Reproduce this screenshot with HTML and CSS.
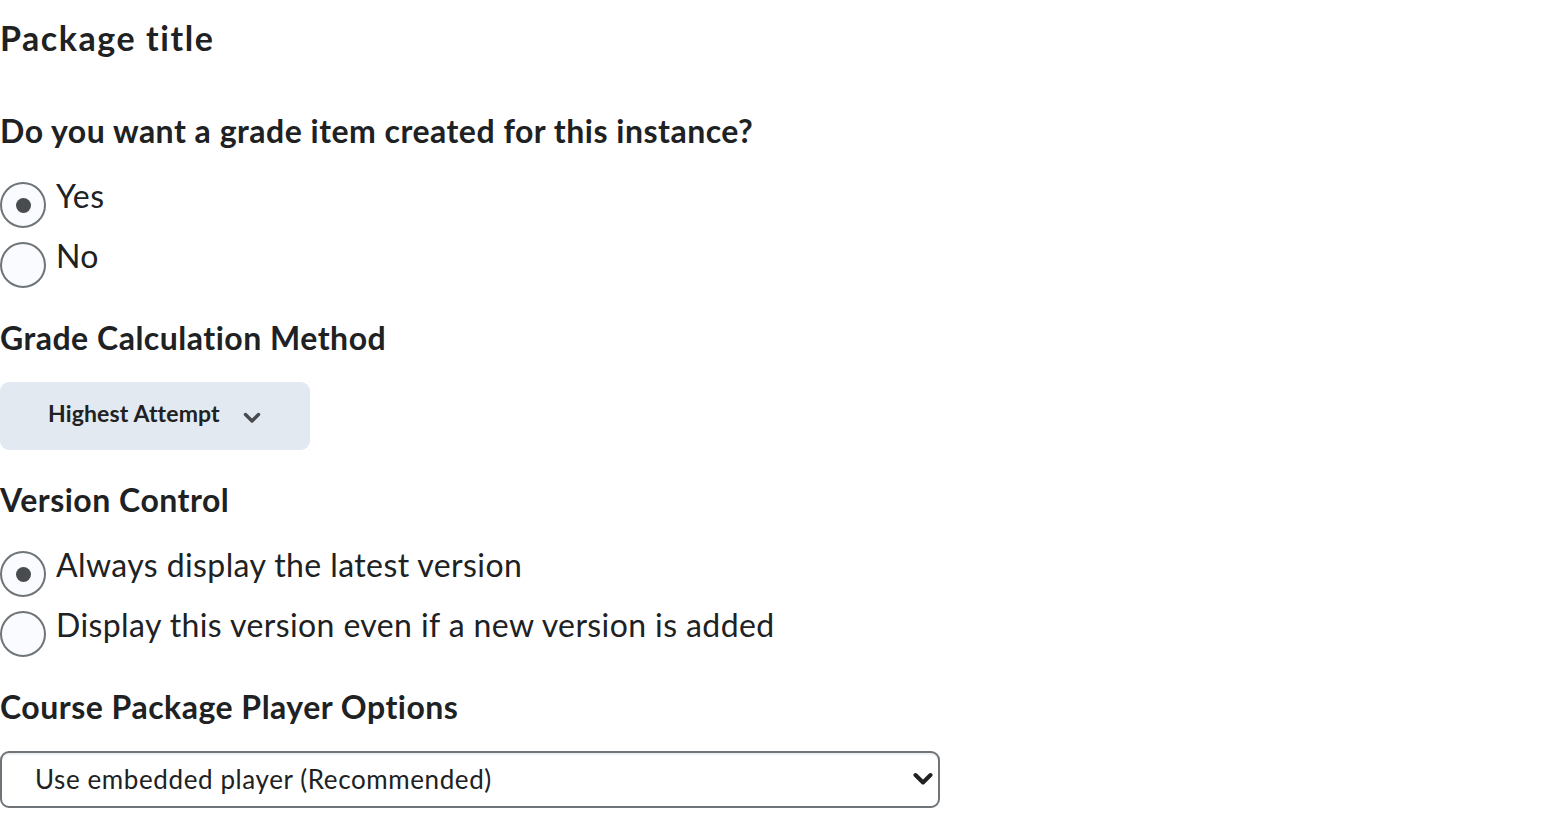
FILE: index.html
```html
<!DOCTYPE html>
<html>
<head>
<meta charset="utf-8">
<link rel="stylesheet" href="styles.css">
</head>
<body>
<main class="form">
  <h1 class="title">Package title</h1>

  <section class="group group-grade">
    <h2 class="label">Do you want a grade item created for this instance?</h2>
    <div class="radios">
      <label class="radio"><span class="circle checked"></span><span class="rtext">Yes</span></label>
      <label class="radio"><span class="circle"></span><span class="rtext">No</span></label>
    </div>
  </section>

  <section class="group">
    <h2 class="label">Grade Calculation Method</h2>
    <button class="dropdown">
      <span class="dtext">Highest Attempt</span>
      <svg class="chev" width="18" height="12" viewBox="0 0 18 12"><path d="M2.5 2.5 L9 9 L15.5 2.5" fill="none" stroke="#494c4e" stroke-width="3.4" stroke-linecap="round" stroke-linejoin="round"/></svg>
    </button>
  </section>

  <section class="group">
    <h2 class="label">Version Control</h2>
    <div class="radios">
      <label class="radio"><span class="circle checked"></span><span class="rtext">Always display the latest version</span></label>
      <label class="radio"><span class="circle"></span><span class="rtext">Display this version even if a new version is added</span></label>
    </div>
  </section>

  <section class="group">
    <h2 class="label">Course Package Player Options</h2>
    <div class="select">
      <span class="stext">Use embedded player (Recommended)</span>
      <svg class="schev" width="20" height="14" viewBox="0 0 20 14"><path d="M2.5 3 L10 10.5 L17.5 3" fill="none" stroke="#202122" stroke-width="4" stroke-linecap="round" stroke-linejoin="round"/></svg>
    </div>
  </section>
</main>
</body>
</html>
```

FILE: styles.css
```css
html, body {
  margin: 0;
  padding: 0;
  background: #ffffff;
}
body {
  font-family: Lato, "Noto Sans", sans-serif;
  color: #202122;
}
.form {
  display: flex;
  flex-direction: column;
}
.title {
  margin: 0;
  padding-top: 18px;
  font-size: 34px;
  font-weight: 700;
  line-height: 40px;
  letter-spacing: 1.55px;
}
.group {
  display: flex;
  flex-direction: column;
  margin-top: 31px;
}
.group-grade {
  margin-top: 54px;
}
.label {
  margin: 0;
  font-size: 32px;
  font-weight: 700;
  line-height: 38px;
  letter-spacing: 0.5px;
}
.radios {
  display: flex;
  flex-direction: column;
  gap: 14px;
  margin-top: 32px;
}
.radio {
  display: flex;
  align-items: flex-start;
  gap: 10px;
  height: 46px;
}
.circle {
  box-sizing: border-box;
  width: 46px;
  height: 46px;
  border-radius: 50%;
  border: 2px solid #6e7477;
  background: #f9fbff;
  display: flex;
  align-items: center;
  justify-content: center;
  flex: none;
}
.circle.checked::after {
  content: "";
  width: 15px;
  height: 15px;
  border-radius: 50%;
  background: #494c4e;
}
.rtext {
  font-size: 32px;
  line-height: 28px;
  letter-spacing: 0.4px;
}
.dropdown {
  margin-top: 25px;
  width: 310px;
  height: 68px;
  box-sizing: border-box;
  border: none;
  border-radius: 9px;
  background: #e3e9f1;
  display: flex;
  align-items: flex-start;
  padding: 0 0 0 48px;
  gap: 23px;
  font-family: Lato, "Noto Sans", sans-serif;
  font-size: 23px;
  font-weight: 700;
  color: #202122;
}
.dtext {
  margin-top: 19px;
  line-height: 24px;
  letter-spacing: 0.15px;
}
.chev {
  margin-top: 30px;
}
.select {
  margin-top: 25px;
  width: 940px;
  height: 57px;
  box-sizing: border-box;
  border: 2px solid #6e7477;
  border-radius: 9px;
  background: #ffffff;
  box-shadow: inset 0 2px 0 #eef0f2;
  display: flex;
  align-items: center;
  justify-content: space-between;
  padding: 0 5px 2px 33px;
  font-size: 26px;
  letter-spacing: 0.6px;
  color: #202122;
}
```
